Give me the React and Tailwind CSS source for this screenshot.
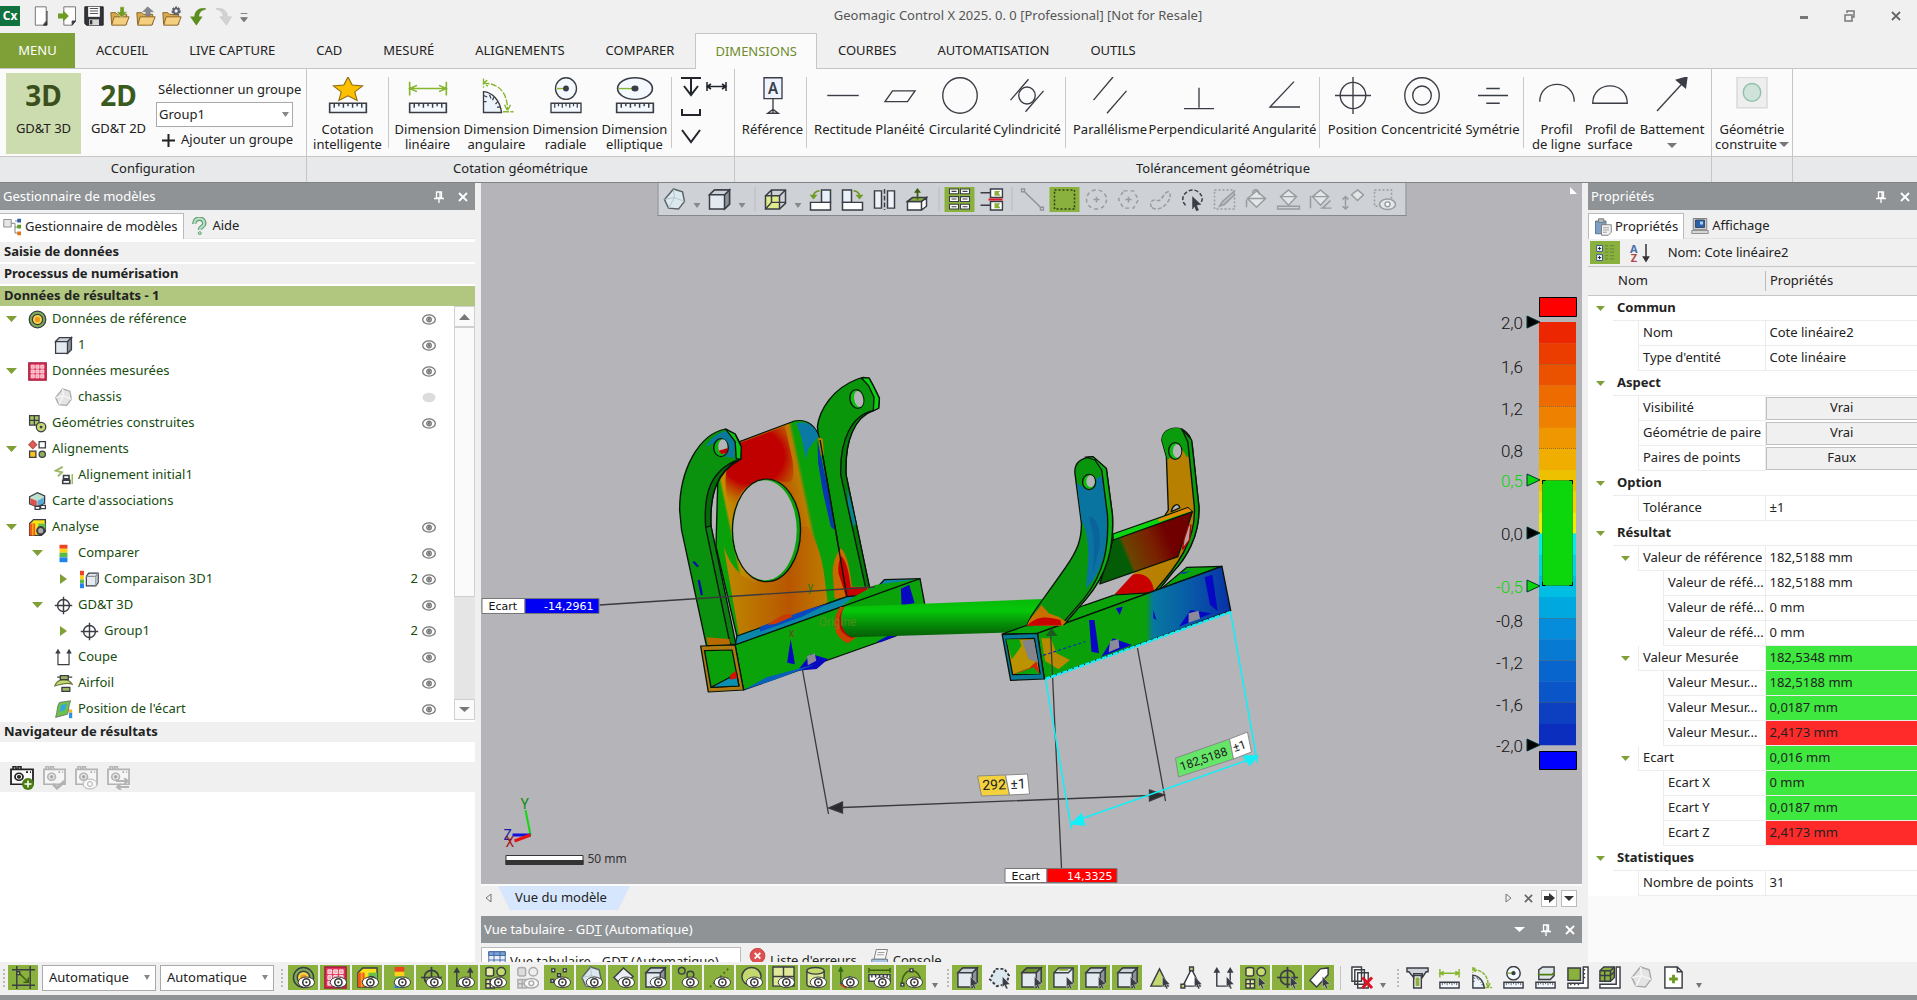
import React, { useState } from "react";

const INK = "#3a3d45";
const GREEN = "#8ab13d";
const LIME = "#c3d96f";

/* ---------- icon drawings, all on a 24 x 24 grid ---------- */

const GLYPHS = {
  newFile: (
    <>
      <path d="M18 6v17h-5z" fill="#333" stroke="#333" />
      <path d="M4 1h13v17l-4 5H4z" fill="#fff" stroke="#777" />
    </>
  ),
  importFile: (
    <>
      <path d="M7 1h14v17l-4 5H7z" fill="#fdfdfd" stroke="#777" />
      <path d="M17 23v-5h4z" fill="#333" />
      <path d="M0 9h6V5l7 7-7 7v-4H0z" fill="#6f9a24" stroke="none" />
    </>
  ),
  save: (
    <>
      <path d="M1 1h22v22H3l-2-2z" fill="#32343a" stroke="#222" />
      <path d="M5 1h14v12H5z" fill="#fff" stroke="none" />
      <path d="M7 3h10M7 6h10M7 9h10" stroke="#555" />
      <path d="M6 16h12v7H6z" fill="#d5d5d5" stroke="none" />
      <path d="M7 17h3v5H7z" fill="#32343a" stroke="none" />
    </>
  ),
  folderIn: (
    <>
      <path d="M1 8h6l2 2h11v12H2z" fill="#d9a94f" stroke="#8d682a" />
      <path d="M5 13h18l-4 10H2z" fill="#f4cf80" stroke="#8d682a" />
      <path d="M12 1h5v6h4l-7 7-6-7h4z" fill="#6f9a24" stroke="#fff" strokeWidth=".5" />
    </>
  ),
  folderOut: (
    <>
      <path d="M1 8h6l2 2h11v12H2z" fill="#d9a94f" stroke="#8d682a" />
      <path d="M5 13h18l-4 10H2z" fill="#f4cf80" stroke="#8d682a" />
      <path d="M12 12h5V7h4l-7-6-6 6h4z" fill="#84888d" stroke="#666" strokeWidth=".5" />
    </>
  ),
  folderGear: (
    <>
      <path d="M1 8h6l2 2h11v12H2z" fill="#d9a94f" stroke="#8d682a" />
      <path d="M5 13h18l-4 10H2z" fill="#f4cf80" stroke="#8d682a" />
      <circle cx="17" cy="6" r="4" stroke="#5c6068" strokeWidth="3" strokeDasharray="2.4 1" />
      <circle cx="17" cy="6" r="3" stroke="#5c6068" strokeWidth="2" />
    </>
  ),
  undo: <path d="M21 3C13 2 8 6 8 13H3l7 10 7-10h-4c0-5 3-8 8-9z" fill="#5d8f1c" stroke="#48750f" strokeWidth=".5" />,
  redo: <path d="M3 3c8-1 13 3 13 10h5l-6 10-8-10h4c0-5-3-8-8-9z" fill="#d2d2d2" stroke="#bbb" strokeWidth=".5" />,
  more: <path d="M7 9h10M7 14h10l-5 5z" fill="#777" stroke="#777" />,

  star: (
    <>
      <path d="M12 0l2.300 5.200 5.700.6-4.300 3.800 1.300 5.600-5-3-5 3 1.300-5.600L4 5.800l5.700-.6z" fill="#fcc000" stroke="#8c6a10" strokeWidth=".6" />
      <path d="M2 17h20v6H2z" fill="#f4f9ff" />
      <path d="M4.500 17v3M7 17v2M9.500 17v3M12 17v2M14.500 17v3M17 17v2M19.500 17v3" strokeWidth=".8" />
    </>
  ),
  dimLinear: (
    <>
      <path d="M2 3v9M22 3v9M2 7.500h20M6 5.500l-4 2 4 2M18 5.500l4 2-4 2" stroke="#86b52e" />
      <path d="M2 17h20v6H2z" fill="#f4f9ff" />
      <path d="M4.500 17v3M7 17v2M9.500 17v3M12 17v2M14.500 17v3M17 17v2M19.500 17v3" strokeWidth=".8" />
    </>
  ),
  dimAngular: (
    <>
      <path d="M3 23V9.500C9 10 14 15 15 23z" fill="#eef4fb" />
      <path d="M3 12l2.500 1M7 11.500L8 14M10 13l-1 2M12.500 16L11 17.500M14 19.500h-2M3 16h2" strokeWidth=".8" />
      <path d="M3 1v6M5.500 2L3 4l3 2M3 4c11 0 16 7 16 17M17 18l2 4 2-4M16 22.500h7" stroke="#86b52e" strokeDasharray="4 1" />
    </>
  ),
  dimRadial: (
    <>
      <circle cx="12" cy="7.500" r="7" fill="#f4f9ff" />
      <path d="M6 7.500h6" stroke="#86b52e" />
      <circle cx="12" cy="7.500" r="1.500" fill={INK} />
      <path d="M2 17h20v6H2z" fill="#f4f9ff" />
      <path d="M4.500 17v3M7 17v2M9.500 17v3M12 17v2M14.500 17v3M17 17v2M19.500 17v3" strokeWidth=".8" />
    </>
  ),
  dimEllipse: (
    <>
      <ellipse cx="12" cy="7.500" rx="9.500" ry="7" fill="#f4f9ff" />
      <path d="M3 7.500h9" stroke="#86b52e" />
      <circle cx="12" cy="7.500" r="1.500" fill={INK} />
      <path d="M2 17h20v6H2z" fill="#f4f9ff" />
      <path d="M4.500 17v3M7 17v2M9.500 17v3M12 17v2M14.500 17v3M17 17v2M19.500 17v3" strokeWidth=".8" />
    </>
  ),
  datum: (
    <>
      <path d="M6 .5h12v13.500H6z" fill="#eef4ff" />
      <text x="12" y="11" textAnchor="middle" fontSize="10" fontWeight="600" fill={INK} stroke="none">A</text>
      <path d="M12 14v9M8.500 23.500L12 21l3.500 2.500z" />
    </>
  ),
  straight: <path d="M3 12h18" />,
  flat: <path d="M7 9h15l-5 7H2z" />,
  circle: <circle cx="12" cy="12" r="11.500" />,
  cylinder: (
    <>
      <circle cx="12" cy="12" r="5.500" />
      <path d="M1 15L13 1.500M11 22.500L23 9" />
    </>
  ),
  parallel: <path d="M1 15L14 0M10 23.500L23 9" />,
  perpend: <path d="M12 7v13M2 20.500h20" />,
  angular: <path d="M22 19.500H2L18 3" />,
  position: (
    <>
      <circle cx="12" cy="12" r="8.500" />
      <path d="M12 0v24M0 12h24" />
    </>
  ),
  concentric: (
    <>
      <circle cx="12" cy="12" r="11.500" />
      <circle cx="12" cy="12" r="6.200" />
    </>
  ),
  symmetry: <path d="M2 12h20M7.500 7.500h9M7.500 17h9" />,
  lineProfile: <path d="M.5 16C.5 1 23.500 1 23.500 16" />,
  surfProfile: <path d="M.5 17C.5 2 23.500 2 23.500 17z" />,
  runout: (
    <>
      <path d="M2 22L19 4" />
      <path d="M22 0l-1 7-6-5z" fill={INK} />
    </>
  ),
  constructed: (
    <>
      <path d="M2 0h20v20H2z" fill="#eee" stroke="#d6d6d6" />
      <circle cx="12" cy="10" r="5.800" fill="#cfe3da" stroke="#8fbfa9" />
    </>
  ),

  donut: (
    <>
      <circle cx="12" cy="12" r="10.500" fill="#7fae57" />
      <circle cx="12" cy="12" r="6.500" fill="#f6d24a" />
      <circle cx="12" cy="12" r="2.500" fill="#e89a1c" stroke="#e89a1c" />
    </>
  ),
  redGrid: (
    <>
      <path d="M1 1h22v22H1z" fill="#e0345a" stroke="#a01c3c" />
      <path d="M4 4h4v4H4zM10 4h4v4h-4zM16 4h4v4h-4zM4 10h4v4H4zM10 10h4v4h-4zM16 10h4v4h-4zM4 16h4v4H4zM10 16h4v4h-4zM16 16h4v4h-4z" fill="#f5a9b6" stroke="#fff" strokeWidth=".8" />
    </>
  ),
  cube: (
    <>
      <path d="M2 7l5-5h15v15l-5 5H2z" fill="#e3eaf0" />
      <path d="M17 22l5-5V2l-5 5z" fill="#8b929a" />
      <path d="M2 7h15l5-5H7z" fill="#cbd3da" />
    </>
  ),
  cubeTop: (
    <>
      <path d="M2 7l5-5h15v15l-5 5H2z" fill="#e3eaf0" />
      <path d="M2 7h15l5-5H7z" fill="#6f9430" />
      <path d="M17 22l5-5V2l-5 5z" fill="#aab1b8" />
    </>
  ),
  cubeEdge: (
    <>
      <path d="M2 7l5-5h15v15l-5 5H2z" fill="#e3eaf0" />
      <path d="M2 7h15l5-5" />
      <path d="M7 4h10" stroke={GREEN} strokeWidth="2" />
    </>
  ),
  wireCube: (
    <>
      <path d="M2 8h14v14H2z" fill="#dfeb8a" />
      <path d="M2 8l6-6h14v14l-6 6M16 8l6-6M8 2v13h14M8 15l-6 7" />
    </>
  ),
  heatCube: (
    <>
      <path d="M2 7l5-5h15v15l-5 5H2z" fill="#f7e11b" />
      <path d="M2 7h7v15H2z" fill="#ef5a1a" stroke="none" />
      <path d="M5 7h2v15H5z" fill="#fba21a" stroke="none" />
      <path d="M13 7h9v8H13z" fill="#68c14a" stroke="none" />
      <circle cx="16" cy="16" r="4.500" fill="#aaa" strokeWidth="2.500" />
    </>
  ),
  poly: (
    <>
      <path d="M11 1l9 3 2 10-6 8-10-1-4-9z" fill="#dbe8ee" stroke="#5c646a" />
      <path d="M11 1l1 9 10 4M12 10L2 12M12 10l-6 11" stroke="#aebbc3" strokeWidth=".8" />
    </>
  ),
  polyGray: (
    <>
      <path d="M11 1l9 3 2 10-6 8-10-1-4-9z" fill="#e4e4e4" stroke="#aaa" />
      <path d="M11 1l1 9 10 4M12 10L2 12M12 10l-6 11" stroke="#f6f6f6" />
    </>
  ),
  shapes: (
    <>
      <path d="M2 2h12v12H2zM2 8h12M8 2v12" fill="#a8c463" />
      <circle cx="16.500" cy="16.500" r="6" fill={LIME} />
      <circle cx="16.500" cy="16.500" r="1" fill={INK} />
    </>
  ),
  shapeGrid: (
    <>
      <path d="M2 3c0-2 8-2 8 0v6c0 2-8 2-8 0z" fill="#e6eda6" />
      <circle cx="18" cy="6" r="4.500" fill={LIME} />
      <path d="M2 14h9v9H2zM2 18.500h9M6.500 14v9" fill="#e6eda6" />
    </>
  ),
  shapeGridGray: (
    <g stroke="#aaa">
      <path d="M2 3c0-2 8-2 8 0v6c0 2-8 2-8 0z" fill="#ddd" />
      <circle cx="18" cy="6" r="4.500" fill="#eee" />
      <path d="M2 14h9v9H2zM2 18.500h9M6.500 14v9" fill="#ddd" />
      <ellipse cx="16" cy="18" rx="7.500" ry="5" fill="#fafafa" />
      <circle cx="16" cy="18" r="2.500" />
    </g>
  ),
  alignments: (
    <>
      <path d="M6 1l5 5-5 5-5-5z" fill="#e25b63" stroke="#b54" />
      <path d="M14 2h8v8h-8z" fill="#fff" />
      <path d="M2 14h8v8H2z" fill="#fbc11c" />
      <circle cx="18" cy="18" r="4" fill="#8fae5a" />
    </>
  ),
  initAlign: (
    <>
      <path d="M11 1L2 6l8 2-5 5" stroke="#9fb86a" strokeWidth="2.500" />
      <path d="M12 12h7v4h-7zM11 18h9v4h-9z" fill="#fff" strokeWidth="2" />
      <path d="M23 10v13" stroke={GREEN} />
    </>
  ),
  mapCard: (
    <>
      <path d="M2 6l10-5 9 4v9l-9 5-10-4z" fill="#bfe1d0" />
      <path d="M3 8l8 3v8l-8-4z" fill="#e0504a" stroke="none" />
      <path d="M12 11l8-4v7l-8 4z" fill="#58a9d8" stroke="none" />
      <path d="M9 18h6v4H9zM16 17h6v4h-6z" fill="#fff" />
    </>
  ),
  heatBar: (
    <>
      <path d="M7 1h10v5H7z" fill="#ee4320" stroke="none" />
      <path d="M7 6h10v5H7z" fill="#fbd21a" stroke="none" />
      <path d="M7 11h10v6H7z" fill="#58b947" stroke="none" />
      <path d="M7 17h10v6H7z" fill="#1f83ee" stroke="none" />
    </>
  ),
  compare3d: (
    <>
      <path d="M0 1h5v6H0z" fill="#ee4320" stroke="none" />
      <path d="M0 7h5v5H0z" fill="#fbd21a" stroke="none" />
      <path d="M0 12h5v5H0z" fill="#58b947" stroke="none" />
      <path d="M0 17h5v6H0z" fill="#1f83ee" stroke="none" />
      <path d="M8 8l3-4h12v12l-3 4H8z" fill="#e3eaf0" strokeWidth="1.500" />
      <path d="M20 20V8l3-4M20 8H8" stroke="#8b929a" />
    </>
  ),
  target: (
    <>
      <circle cx="12" cy="12" r="7.500" strokeWidth="1.800" />
      <path d="M12 1v22M1 12h22" strokeWidth="1.800" />
    </>
  ),
  section: (
    <>
      <path d="M5 4v17h14V4" strokeWidth="1.500" />
      <path d="M5 1L1.500 7h7zM19 1l-3.500 6h7z" fill={INK} stroke="none" />
    </>
  ),
  airfoil: (
    <>
      <path d="M1 15C5 5 18 5 23 13c-7-3-14 0-22 2z" fill={LIME} stroke="#6b7a3a" />
      <path d="M8 2h10v5H8zM10 17h10v5H10z" fill="#9db35c" />
      <path d="M4 4h4M18 4h5" />
    </>
  ),
  deviation: (
    <>
      <path d="M7 3l14-2c-3 7-2 12-4 17L2 22C5 14 3 8 7 3z" fill="#6cc24a" stroke="#666" strokeWidth="1" />
      <path d="M9 6l7-1c-1 3-1 6-3 8l-6 2c2-4 1-6 2-9z" fill="#35a5e0" stroke="none" />
      <path d="M19 12h4v4h-4z" fill="#f6b51a" stroke="none" />
      <path d="M19 16h4v7h-4z" fill="#2f8fe6" stroke="none" />
    </>
  ),
  points: (
    <>
      <path d="M4 3h3v3H4zM16 3h3v3h-3zM10 8h3v3h-3zM3 14h3v3H3z" fill="#fff" />
      <path d="M8 15h3v3H8z" fill={LIME} />
    </>
  ),
  plane: <path d="M12 2l10 9-11 10-9-9z" fill="#e8eef2" />,
  rings: (
    <>
      <circle cx="6" cy="5" r="3.500" />
      <circle cx="15" cy="9" r="3.500" />
    </>
  ),
  dotLine: <path d="M2 22L22 2" strokeDasharray="2 3" strokeWidth="2" stroke="#4d6b18" />,
  disc: <ellipse cx="12" cy="11" rx="10" ry="9.500" fill={LIME} />,
  quad: <path d="M1 1h22v20H1zM1 11h22M12 1v20" fill="#dfe997" />,
  tin: (
    <>
      <path d="M3 5v14c0 4 18 4 18 0V5" fill="#dfe997" />
      <ellipse cx="12" cy="5" rx="9" ry="3.500" fill={LIME} />
    </>
  ),
  axes: (
    <>
      <path d="M5 4v15" stroke="#2c6b16" strokeWidth="1.500" />
      <path d="M5 0L2 6h6z" fill="#2c6b16" stroke="none" />
      <path d="M5 19l10-8" stroke="#1d49b8" strokeWidth="2" />
      <path d="M5 19l6 4" stroke="#d82a1d" strokeWidth="2" />
    </>
  ),
  ruler: (
    <>
      <path d="M1 2v5M23 2v5M1 4.500h22" stroke="#3c6010" />
      <path d="M1 9h22v7H1z" fill="#fff" />
      <path d="M4 9v3M8 9v3M12 9v3M16 9v3M20 9v3" />
    </>
  ),
  arc: (
    <>
      <path d="M2 19C2 0 22 0 22 19" stroke="#3c6010" />
      <path d="M1 18h3v3H1zM10.500 3h3v3h-3z" fill="#fff" />
    </>
  ),
  meshSel: <path d="M8 3h9l5 7-3 9-10 2-7-7z" fill="#dbe8ee" strokeDasharray="3 2" strokeWidth="2" />,
  tri: <path d="M12 3l9 18H3z" fill={LIME} />,
  triPts: (
    <>
      <path d="M12 3l9 18H3z" fill="#fff" />
      <path d="M10 1h4v4h-4zM1 19h4v4H1z" fill={LIME} />
    </>
  ),
  tag: <path d="M13 3l8-1v7L9 22l-7-7z" fill="#fff" />,
  fit: (
    <>
      <path d="M5 0v24M0 4h24M19 0v24M0 20h24" />
      <path d="M7 7l9 9M17 12v5h-5" stroke="#3c6010" />
      <path d="M5 6h3v3H5z" fill={LIME} />
    </>
  ),
  removeDoc: (
    <>
      <path d="M2 1h10v15H2zM5 4h10v15H5zM8 7h11v16H8z" fill="#fff" />
      <path d="M13 12l10 11M23 12L13 23" stroke="#dd1122" strokeWidth="3" />
    </>
  ),
  caliper: (
    <>
      <path d="M1 2h22v4h-2l-4 6V8H8v4L3 6H1z" fill="#cfd3d8" />
      <path d="M8 10h8v13H8z" />
      <path d="M10 12h4v9h-4z" fill={GREEN} stroke="none" />
    </>
  ),
  slab: (
    <>
      <path d="M5 4l4-3h12v9l-4 4H5z" fill="#dfe4e8" />
      <path d="M4 9h15l2-2" stroke="#4f7d14" strokeWidth="2" />
      <path d="M2 17h20v6H2z" fill="#f4f9ff" />
      <path d="M4.500 17v3M7 17v2M9.500 17v3M12 17v2M14.500 17v3M17 17v2M19.500 17v3" strokeWidth=".8" />
    </>
  ),
  squareRule: (
    <>
      <path d="M2 2h13v13H2z" fill={GREEN} />
      <path d="M18 1h5v22H2v-5h16z" fill="#fff" />
      <path d="M18 4h2M18 8h2M18 12h2M5 18v2M9 18v2M13 18v2" />
    </>
  ),
  cubeRule: (
    <>
      <path d="M2 5l4-4h11v11l-4 4H2z" fill={GREEN} />
      <path d="M2 5h11l4-4M13 5v11M7 5v11M2 10h11l4-4" />
      <path d="M19 1h4v22H2v-4h17z" fill="#fff" />
    </>
  ),
  addDoc: (
    <>
      <path d="M3 1h13l5 5v17H3z" fill="#fff" />
      <path d="M16 1v5h5" />
      <path d="M12 9v9M7.500 13.500h9" stroke="#6f9a24" strokeWidth="3" />
    </>
  ),
  tiltLeft: (
    <>
      <path d="M13 2h9v13h-9z" fill="#e8f0f8" />
      <path d="M2 15h20v8H2z" fill="#fff" />
      <path d="M11 3C7 3 5 6 5 8" stroke="#6f9a24" strokeWidth="1.800" />
      <path d="M1 7h8l-4 5z" fill="#6f9a24" stroke="none" />
    </>
  ),
  tiltRight: (
    <>
      <path d="M2 2h9v13H2z" fill="#e8f0f8" />
      <path d="M2 15h20v8H2z" fill="#fff" />
      <path d="M13 3c4 0 6 3 6 5" stroke="#6f9a24" strokeWidth="1.800" />
      <path d="M15 7h8l-4 5z" fill="#6f9a24" stroke="none" />
    </>
  ),
  mirror: (
    <>
      <path d="M2 3h7v18H2zM15 3h7v18h-7z" fill="#eef3f8" />
      <path d="M12 1v22" strokeDasharray="5 2" />
    </>
  ),
  normalTo: (
    <>
      <path d="M3 14h14v9H3zM17 14l5-4v9l-5 4z" fill="#fff" />
      <path d="M3 14l5-4h14l-5 4z" fill={GREEN} />
      <path d="M13 12V3" stroke="#3c6010" strokeWidth="1.800" />
      <path d="M13 0L9.500 5h7z" fill="#3c6010" stroke="none" />
    </>
  ),
  labelsOn: (
    <path d="M2 1h9v5H2zM13 1h9v5h-9zM2 9h9v5H2zM13 9h9v5h-9zM2 17h9v5H2zM13 17h9v5h-9zM4 3.500h5M15 3.500h5M4 11.500h5M15 11.500h5M4 19.500h5M15 19.500h5" fill="#fff" strokeWidth="1.100" />
  ),
  labelsSplit: (
    <>
      <path d="M11 1h12v9H11zM11 14h12v9H11z" fill="#fff" />
      <path d="M15 3h6l-2 2 2 3h-6zM15 16h6l-2 2 2 3h-6z" fill={GREEN} stroke="none" />
      <path d="M1 5h10M1 18h10" />
      <path d="M9 12h14" stroke="#e0182a" strokeWidth="2" />
    </>
  ),
  pickLine: (
    <g stroke="#8f9498">
      <path d="M4 4l16 16M1 1h3v3H1zM20 20h3v3h-3z" fill="#ddd" />
    </g>
  ),
  pickRect: (
    <path d="M2 2h20v20H2z" strokeDasharray="2 2" stroke="#2f3d12" strokeWidth="1.500" />
  ),
  pickCircle: (
    <g stroke="#979ca0">
      <circle cx="12" cy="12" r="10" strokeDasharray="4 3" strokeWidth="1.500" />
      <path d="M12 9v6M9 12h6" strokeWidth="1.500" />
    </g>
  ),
  pickHex: (
    <g stroke="#979ca0">
      <path d="M7 3h10l5 9-5 9H7l-5-9z" strokeDasharray="4 3" strokeWidth="1.500" />
      <path d="M12 9v6M9 12h6" strokeWidth="1.500" />
    </g>
  ),
  pickFree: <path d="M3 20c-3-6 2-9 6-7s6-9 11-9c5 5-2 13-6 16s-9 2-11 0z" stroke="#979ca0" strokeWidth="1.500" strokeDasharray="4 2" />,
  pickLasso: (
    <>
      <path d="M5 18C-2 10 6 2 12 2s14 8 7 15" strokeDasharray="4 2" strokeWidth="1.500" />
      <path d="M12 9l8 8-4 1 2 5-2 1-2-5-2 3z" fill={INK} strokeWidth=".5" />
    </>
  ),
  pickBrush: (
    <g stroke="#979ca0">
      <path d="M2 2h20v20H2z" strokeDasharray="2 2" />
      <path d="M21 4L10 14l-3 5 5-2L22 7z" fill="#bcc0c3" />
    </g>
  ),
  pickFill: (
    <g stroke="#979ca0">
      <path d="M12 3l9 8-9 9-9-9z" fill="#e3e5e7" />
      <path d="M3 11h18M8 7c0-7 6-7 7 0M2 12v8" />
    </g>
  ),
  pickDrop: (
    <g stroke="#979ca0">
      <path d="M12 2l8 7-8 9-8-9z" fill="#e3e5e7" />
      <path d="M4 9h16M1 19h22v3H1z" />
    </g>
  ),
  pickSlope: (
    <g stroke="#979ca0">
      <path d="M12 2l8 7-8 9-8-9z" fill="#e3e5e7" />
      <path d="M4 9h16M2 8v13M14 21l8-8M12 21h11" />
    </g>
  ),
  pickMove: (
    <g stroke="#979ca0">
      <path d="M17 2l6 5-6 6-6-6z" fill="#e3e5e7" />
      <path d="M5 9v13M2 12l3-3 3 3M2 19l3 3 3-3" strokeWidth="1.500" />
    </g>
  ),
  pickEye: (
    <g stroke="#979ca0">
      <path d="M2 2h17v17H2z" strokeDasharray="2 2" strokeWidth="1.500" />
      <ellipse cx="15" cy="17" rx="8" ry="5.500" fill="#e3e5e7" />
      <circle cx="15" cy="17" r="2.500" fill="#fff" strokeWidth="1.500" />
    </g>
  ),
  treeTab: (
    <>
      <path d="M1 2h10v10H1z" fill="#e6e6e6" stroke="#888" />
      <path d="M11 7h5v13h4M16 4h4M16 12h4" stroke="#777" />
      <path d="M19 1h5v5h-5z" fill="#2d5ea8" stroke="none" />
      <path d="M19 9h5v5h-5z" fill="#5c9c1e" stroke="none" />
      <path d="M19 18h5v5h-5z" fill="#e07418" stroke="none" />
    </>
  ),
  help: (
    <>
      <path d="M6 9c-1-9 14-9 13 0 0 4-6 4-6 8" stroke="#5d9c74" strokeWidth="6" />
      <path d="M6 9c-1-9 14-9 13 0 0 4-6 4-6 8" stroke="#b9dec4" strokeWidth="3" />
      <circle cx="13" cy="21.500" r="2" fill="#b9dec4" stroke="#5d9c74" />
    </>
  ),
  clipboard: (
    <>
      <path d="M2 4h14v17H2z" fill="#7f9fc4" stroke="#55718f" />
      <path d="M6 1h7v5H6z" fill="#b8b8b8" stroke="#777" />
      <path d="M10 9h13v10l-4 4h-9z" fill="#f2f2f2" stroke="#777" />
      <path d="M12 13h8M12 16h8M12 19h5" stroke="#999" />
    </>
  ),
  monitor: (
    <>
      <path d="M3 2h18v15H3z" fill="#c9ced4" stroke="#777" />
      <path d="M6 4h12v10H6z" fill="#2d5fa8" stroke="#345" />
      <path d="M12 6h4v4h-4z" fill="#a8d0f0" stroke="none" />
      <path d="M1 18h22v4H1z" fill="#d6d6d6" stroke="#888" />
    </>
  ),
  sortCat: (
    <>
      <path d="M2 3h7v7H2zM2 14h7v7H2z" fill="#fff" stroke="#3a5a9a" />
      <path d="M5.500 4.500v4M3.500 6.500h4M5.500 15.500v4M3.500 17.500h4" stroke="#222" />
      <path d="M12 3h4M12 7h4M12 11h4M12 15h4M12 19h4M18 3h5M18 7h5M18 11h5M18 15h5M18 19h5" stroke="#6d8f38" strokeWidth="1.500" />
    </>
  ),
  tableTab: (
    <>
      <path d="M1 1h22v22H1z" fill="#eaf1fb" stroke="#3d639c" />
      <path d="M1 1h22v5H1z" fill="#7ea3d6" stroke="#3d639c" />
      <path d="M1 12h22M1 18h22M8 1v22M16 1v22" stroke="#3d639c" />
    </>
  ),
  errorTab: (
    <>
      <circle cx="12" cy="11" r="10.500" fill="#e05050" stroke="#c23a3a" />
      <path d="M8 7l8 8M16 7l-8 8" stroke="#fff" strokeWidth="2.500" />
    </>
  ),
  consoleTab: (
    <>
      <path d="M7 2h15l-3 13H4z" fill="#f6f6f6" stroke="#777" />
      <path d="M9 6h9M8 9h9" stroke="#999" />
      <path d="M1 15h21v7H1z" fill="#a9c4e4" stroke="#678" />
    </>
  ),
  camera: (
    <>
      <path d="M1 5h22v17H1z" fill="#fafafa" strokeWidth="1.800" />
      <path d="M3 5V2h3v3M8 5V2h3v3" strokeWidth="1.500" />
      <circle cx="9" cy="13.500" r="4" strokeWidth="1.800" />
      <circle cx="9" cy="13.500" r="1.500" fill={INK} />
      <path d="M16 8h2M20 8h1" strokeWidth="2" />
    </>
  ),
};

function Glyph({ name, w = 24, h = 24, color = INK, sw = 1.2, eye, cursor }) {
  return (
    <svg
      width={w}
      height={h}
      viewBox="0 0 24 24"
      preserveAspectRatio="none"
      fill="none"
      stroke={color}
      strokeWidth={sw}
      className="shrink-0"
      aria-hidden
    >
      {GLYPHS[name]}
      {eye && (
        <>
          <ellipse cx="15" cy="17" rx="8.500" ry="5.500" fill="#fff" stroke="#333" strokeWidth="1" />
          <circle cx="15" cy="17" r="3.800" fill="#fff" stroke="#333" strokeWidth="1.600" />
          <circle cx="15" cy="17" r="1.200" fill="#333" stroke="none" />
        </>
      )}
      {cursor && <path d="M15 11l8 8-4 .5 2 4-2 .5-2-4-2 2.500z" fill={INK} stroke="#fff" strokeWidth=".4" />}
    </svg>
  );
}

function Down({ className = "text-[#777]", w = 8 }) {
  return (
    <svg width={w} height="5" viewBox="0 0 8 5" preserveAspectRatio="none" className={`shrink-0 ${className}`} aria-hidden>
      <path d="M0 0h8L4 5z" fill="currentColor" />
    </svg>
  );
}

function Pin() {
  return (
    <svg width="10" height="12" viewBox="0 0 10 12" fill="none" stroke="#fff" aria-hidden>
      <path d="M2.500 1h5v6h-5zM6 1v6M0 7.500h10M5 8v4" strokeWidth="1.300" />
    </svg>
  );
}

function Cross({ color = "#fff", size = 10 }) {
  return (
    <svg width={size} height={size} viewBox="0 0 10 10" fill="none" stroke={color} strokeWidth="1.800" aria-hidden>
      <path d="M1 1l8 8M9 1L1 9" />
    </svg>
  );
}

/* ---------- title bar and ribbon ---------- */

const QUICK = ["newFile", "importFile", "save", "folderIn", "folderOut", "folderGear", "undo", "redo"];
const TABS = ["ACCUEIL", "LIVE CAPTURE", "CAD", "MESURÉ", "ALIGNEMENTS", "COMPARER", "DIMENSIONS", "COURBES", "AUTOMATISATION", "OUTILS"];

function TitleBar() {
  return (
    <header className="relative flex h-[33px] shrink-0 items-center justify-between bg-[#f0f0f0] pb-0.5">
      <div className="flex items-center">
        <span className="mr-3 flex size-5 items-center justify-center bg-[#10733f] text-xs font-bold text-white">Cx</span>
        {QUICK.map((n) => (
          <button key={n} aria-label={n} className="flex w-[26px] justify-start">
            <Glyph name={n} w={20} h={20} />
          </button>
        ))}
        <button aria-label="more" className="-ml-1">
          <Glyph name="more" w={16} h={20} />
        </button>
      </div>
      <h1 className="pointer-events-none absolute inset-x-0 ml-[119px] text-center text-[13px] text-[#555]">
        Geomagic Control X 2025. 0. 0 [Professional] [Not for Resale]
      </h1>
      <div className="flex items-center gap-9 pr-4">
        <button aria-label="Réduire" className="mt-1 h-[3px] w-2 bg-[#777]" />
        <button aria-label="Restaurer">
          <svg width="11" height="12" viewBox="0 0 11 12" fill="none" stroke="#777" strokeWidth="1.500">
            <path d="M3 3V1h7v6H8M1 5h7v6H1z" />
          </svg>
        </button>
        <button aria-label="Fermer">
          <Cross color="#666" />
        </button>
      </div>
    </header>
  );
}

function TabBar() {
  const [active, setActive] = useState("DIMENSIONS");
  return (
    <nav className="flex h-9 shrink-0 items-stretch gap-px border-b border-[#c6c6c6] bg-[#f0f0f0] text-[13px]">
      <button className="w-[75px] bg-[#7fa036] text-white">MENU</button>
      {TABS.map((t) => (
        <button
          key={t}
          onClick={() => setActive(t)}
          className={
            t === active
              ? "-mb-px border border-b-0 border-[#c6c6c6] bg-[#fbfbfb] px-[19px] text-[#6e8c2c]"
              : "px-5 text-[#222]"
          }
        >
          {t}
        </button>
      ))}
    </nav>
  );
}

function Tool({ icon, w, children, iw = 36, ih = 37 }) {
  return (
    <button className={`flex shrink-0 flex-col items-center pt-2 ${w}`}>
      <Glyph name={icon} w={iw} h={ih} sw={0.9} />
      <span className="mt-2 text-[13px] leading-[15px] whitespace-nowrap">{children}</span>
    </button>
  );
}

function Rule() {
  return <span className="my-2 w-px shrink-0 bg-[#c9c9c9]" />;
}

function Group({ label, className, children }) {
  return (
    <section className={`flex shrink-0 flex-col border-r border-[#c6c6c6] ${className}`}>
      <div className="flex h-[88px] items-stretch border-b border-[#c6c6c6] bg-[#fbfbfb]">{children}</div>
      <h2 className="flex h-6 items-center justify-center bg-[#e7e9eb] text-[13px]">{label}</h2>
    </section>
  );
}

function Ribbon() {
  return (
    <div className="flex h-[114px] shrink-0 overflow-hidden border-b border-[#7f8487] bg-[#e7e9eb]">
      <Group label="Configuration" className="w-[307px]">
        <button className="mt-1 mb-0.5 ml-1.5 flex w-[75px] flex-col items-center bg-[#cddcae] pt-1">
          <span className="text-[28px] leading-9 font-bold text-[#3b4f1d]">3D</span>
          <span className="mt-1.5 text-[13px]">GD&amp;T 3D</span>
        </button>
        <button className="mt-1 flex w-[75px] flex-col items-center pt-1">
          <span className="text-[28px] leading-9 font-bold text-[#3b5a1d]">2D</span>
          <span className="mt-1.5 text-[13px]">GD&amp;T 2D</span>
        </button>
        <div className="flex flex-col pt-2.5 text-[13px]">
          <label htmlFor="group" className="pl-0.5 leading-5 whitespace-nowrap">Sélectionner un groupe</label>
          <div className="relative mt-[3px] w-[137px]">
            <select id="group" className="h-[25px] w-full appearance-none border border-[#aaa] bg-white pl-0.5">
              <option>Group1</option>
            </select>
            <Down className="absolute top-2.5 right-1 text-[#888]" w={7} />
          </div>
          <button className="flex h-[26px] items-center gap-1.5 pl-1.5 whitespace-nowrap">
            <svg width="13" height="13" stroke="#222" strokeWidth="2" aria-hidden>
              <path d="M6.500 0v13M0 6.500h13" />
            </svg>
            Ajouter un groupe
          </button>
        </div>
      </Group>
      <Group label="Cotation géométrique" className="w-[428px]">
        <Tool icon="star" w="w-[81px]" iw={44}>Cotation<br />intelligente</Tool>
        <Rule />
        <span className="w-1" />
        <Tool icon="dimLinear" w="w-[69px]" iw={44}>Dimension<br />linéaire</Tool>
        <Tool icon="dimAngular" w="w-[69px]">Dimension<br />angulaire</Tool>
        <Tool icon="dimRadial" w="w-[69px]">Dimension<br />radiale</Tool>
        <Tool icon="dimEllipse" w="w-[69px]" iw={44}>Dimension<br />elliptique</Tool>
        <span className="w-0.5" />
        <Rule />
        <div className="grid grid-cols-2 content-start gap-x-1 pt-2 pl-2">
          <button aria-label="Profondeur">
            <svg width="22" height="20" fill="none" stroke="#22252b" strokeWidth="2">
              <path d="M1 1h20M11 1v16M4 9l7 9 7-9" />
            </svg>
          </button>
          <button aria-label="Distance">
            <svg width="22" height="20" fill="none" stroke="#22252b" strokeWidth="1.500">
              <path d="M1 5v9M20 5v9M1 9.500h19M5 7l-4 2.500L5 12M16 7l4 2.500-4 2.500" />
            </svg>
          </button>
          <button aria-label="Lamage" className="col-span-2 w-[22px] pt-2">
            <svg width="22" height="18" fill="none" stroke="#22252b" strokeWidth="2">
              <path d="M2 4v6h18V4" />
            </svg>
          </button>
          <button aria-label="Fraisage" className="col-span-2 w-[22px] pt-1">
            <svg width="22" height="18" fill="none" stroke="#22252b" strokeWidth="2">
              <path d="M2 3l9 12 9-12" />
            </svg>
          </button>
        </div>
      </Group>
      <Group label="Tolérancement géométrique" className="w-[977px]">
        <span className="w-1" />
        <Tool icon="datum" w="w-[67px]">Référence</Tool>
        <Rule />
        <span className="w-1.5" />
        <Tool icon="straight" w="w-[60px]" iw={42}>Rectitude</Tool>
        <Tool icon="flat" w="w-[54px]">Planéité</Tool>
        <Tool icon="circle" w="w-[66px]">Circularité</Tool>
        <Tool icon="cylinder" w="w-[68px]">Cylindricité</Tool>
        <span className="w-1" />
        <Rule />
        <span className="w-1.5" />
        <Tool icon="parallel" w="w-[76px]">Parallélisme</Tool>
        <Tool icon="perpend" w="w-[102px]">Perpendicularité</Tool>
        <Tool icon="angular" w="w-[69px]">Angularité</Tool>
        <Rule />
        <span className="w-1.5" />
        <Tool icon="position" w="w-[53px]">Position</Tool>
        <Tool icon="concentric" w="w-[85px]">Concentricité</Tool>
        <Tool icon="symmetry" w="w-[57px]">Symétrie</Tool>
        <span className="w-0.5" />
        <Rule />
        <span className="w-1.5" />
        <Tool icon="lineProfile" w="w-[53px]">Profil<br />de ligne</Tool>
        <Tool icon="surfProfile" w="w-[54px]">Profil de<br />surface</Tool>
        <Tool icon="runout" w="w-[70px]">
          Battement
          <Down className="mx-auto mt-1.5 text-[#777]" w={10} />
        </Tool>
      </Group>
      <Group label="" className="w-[81px]">
        <Tool icon="constructed" w="w-[80px]">
          Géométrie
          <span className="flex items-center gap-0.5">construite<Down w={10} /></span>
        </Tool>
      </Group>
      <div className="h-[88px] flex-1 border-b border-[#c6c6c6] bg-[#fbfbfb]" />
    </div>
  );
}

/* ---------- model manager ---------- */

const TREE = [
  { text: "Données de référence", icon: "donut", level: 0, arrow: "open", eye: true },
  { text: "1", icon: "cube", level: 1, eye: true },
  { text: "Données mesurées", icon: "redGrid", level: 0, arrow: "open", eye: true },
  { text: "chassis", icon: "polyGray", level: 1, eye: "off" },
  { text: "Géométries construites", icon: "shapes", level: 0, eye: true },
  { text: "Alignements", icon: "alignments", level: 0, arrow: "open" },
  { text: "Alignement initial1", icon: "initAlign", level: 1 },
  { text: "Carte d'associations", icon: "mapCard", level: 0 },
  { text: "Analyse", icon: "heatCube", level: 0, arrow: "open", eye: true },
  { text: "Comparer", icon: "heatBar", level: 1, arrow: "open", eye: true },
  { text: "Comparaison 3D1", icon: "compare3d", level: 2, arrow: "closed", eye: true, count: 2 },
  { text: "GD&T 3D", icon: "target", level: 1, arrow: "open", eye: true },
  { text: "Group1", icon: "target", level: 2, arrow: "closed", eye: true, count: 2 },
  { text: "Coupe", icon: "section", level: 1, eye: true },
  { text: "Airfoil", icon: "airfoil", level: 1, eye: true },
  { text: "Position de l'écart", icon: "deviation", level: 1, eye: true },
];

const INDENT = ["pl-1.5", "pl-8", "pl-[58px]"];

function TreeArrow({ state }) {
  return (
    <svg width="12" height="12" viewBox="0 0 12 12" className="mr-2.5 shrink-0" fill="#7fa036" aria-hidden>
      {state === "open" && <path d="M0 3h11L5.500 9z" />}
      {state === "closed" && <path d="M2 1l7 5-7 5z" />}
    </svg>
  );
}

function EyeButton({ off }) {
  return (
    <button aria-label="Visibilité" className="ml-1">
      <svg width="14" height="11" viewBox="0 0 14 11" fill="none" stroke="#777" strokeWidth="1.300">
        {off ? (
          <ellipse cx="7" cy="5.500" rx="6.500" ry="4.800" fill="#dcdcdc" stroke="none" />
        ) : (
          <>
            <ellipse cx="7" cy="5.500" rx="6.300" ry="4.600" />
            <circle cx="7" cy="5.500" r="2.300" />
            <circle cx="7" cy="5.500" r=".8" fill="#555" />
          </>
        )}
      </svg>
    </button>
  );
}

function PanelHead({ title, menu }) {
  return (
    <div className="flex h-[27px] shrink-0 items-center bg-[#8f9396] pl-px text-[13px] text-white">
      <h2 className="flex-1 pt-px pl-0.5">{title}</h2>
      {menu && <Down className="mr-4 text-white" w={11} />}
      <button aria-label="Épingler" className="mr-[14px]"><Pin /></button>
      <button aria-label="Fermer" className="mr-[7px]"><Cross /></button>
    </div>
  );
}

function Bar({ children, active }) {
  return (
    <button
      className={`flex h-5 w-full shrink-0 items-center pl-1 text-[13px] font-bold ${active ? "bg-[#b1c77f]" : "mb-0.5 bg-[#f0f0f0]"}`}
    >
      {children}
    </button>
  );
}

function ModelManager() {
  return (
    <aside className="flex w-[475px] shrink-0 flex-col bg-white">
      <PanelHead title="Gestionnaire de modèles" />
      <div className="mb-[3px] flex h-[29px] shrink-0 items-end border-b border-[#e6e6e6] bg-[#f0f0f0] text-[13px]">
        <button className="-mb-px flex h-[26px] items-center gap-1 border-t border-r border-[#bbb] bg-white pr-1.5 pl-[3px]">
          <Glyph name="treeTab" w={18} h={18} />
          Gestionnaire de modèles
        </button>
        <button className="flex h-6 items-center gap-1 pl-1.5">
          <Glyph name="help" w={18} h={18} />
          Aide
        </button>
      </div>
      <Bar>Saisie de données</Bar>
      <Bar>Processus de numérisation</Bar>
      <Bar active>Données de résultats - 1</Bar>
      <div className="flex">
        <ul className="flex-1 text-[13px] text-[#174c10]">
          {TREE.map((n) => (
            <li key={n.text} className={`flex h-[26px] items-center pr-[18px] ${INDENT[n.level]}`}>
              <TreeArrow state={n.arrow} />
              <Glyph name={n.icon} w={19} h={19} sw={1.6} />
              <span className="ml-[5px] flex-1">{n.text}</span>
              {n.count}
              {n.eye && <EyeButton off={n.eye === "off"} />}
            </li>
          ))}
        </ul>
        <div className="mb-0.5 flex w-[21px] flex-col bg-[#e5e5e5]">
          <button aria-label="Monter" className="flex h-[21px] items-center justify-center border border-[#d0d0d0] bg-[#fafafa]">
            <svg width="11" height="6" fill="#777"><path d="M0 6h11L5.500 0z" /></svg>
          </button>
          <div className="h-[270px] border border-[#d0d0d0] bg-[#fafafa]" />
          <span className="flex-1" />
          <button aria-label="Descendre" className="flex h-[21px] items-center justify-center border border-[#d0d0d0] bg-[#fafafa]">
            <Down w={11} />
          </button>
        </div>
      </div>
      <Bar>Navigateur de résultats</Bar>
      <div className="mt-[18px] flex h-[30px] items-start gap-[9px] bg-[#f0f0f0] pt-[3px] pl-2.5">
        <button aria-label="Capturer" className="relative">
          <Glyph name="camera" w={24} h={21} color="#222" />
          <svg width="12" height="12" className="absolute right-0 -bottom-1">
            <circle cx="6" cy="6" r="6" fill="#4c7d12" />
            <path d="M6 2.500v7M2.500 6h7" stroke="#fff" strokeWidth="1.500" />
          </svg>
        </button>
        <button aria-label="Valider" className="relative opacity-50">
          <Glyph name="camera" w={23} h={21} color="#777" />
          <svg width="14" height="11" className="absolute right-0 -bottom-1" fill="none">
            <path d="M1 5l4 4 8-7" stroke="#777" strokeWidth="3" />
          </svg>
        </button>
        <button aria-label="Afficher" className="relative opacity-50">
          <Glyph name="camera" w={23} h={21} color="#777" />
          <svg width="16" height="12" className="absolute right-0 -bottom-1" fill="#fff" stroke="#777">
            <ellipse cx="8" cy="6" rx="7" ry="5" />
            <circle cx="8" cy="6" r="2.500" />
          </svg>
        </button>
        <button aria-label="Échanger" className="relative opacity-50">
          <Glyph name="camera" w={23} h={21} color="#777" />
          <svg width="14" height="12" className="absolute right-0 -bottom-1" fill="none" stroke="#777" strokeWidth="2">
            <path d="M0 3h11M8 0l4 3-4 3M13 9H2M5 6L1 9l4 3" />
          </svg>
        </button>
      </div>
    </aside>
  );
}

/* ---------- 3D view ---------- */

const GRAY_TOOL = ["pickCircle", "pickHex", "pickFree", "pickLasso", "pickBrush", "pickFill", "pickDrop", "pickSlope", "pickMove", "pickEye"];

function ViewTool({ name, on }) {
  return (
    <button
      aria-label={name}
      className={`flex h-[25px] shrink-0 items-center justify-center ${on ? "mx-px w-[30px] bg-[#8ab13d]" : "w-8"}`}
    >
      <Glyph name={name} w={24} h={23} sw={1.5} />
    </button>
  );
}

function ViewToolbar() {
  return (
    <div className="absolute top-0 left-1/2 flex h-[33px] w-[749px] -translate-x-1/2 items-center border border-t-0 border-[#85898c] bg-[#ced1d6]">
      <ViewTool name="poly" />
      <Down className="mx-[3px] mt-3 text-[#888]" w={7} />
      <ViewTool name="cube" />
      <Down className="mx-[3px] mt-3 text-[#888]" w={7} />
      <span className="mr-1 ml-1.5 h-6 w-px bg-[#bbb]" />
      <ViewTool name="wireCube" />
      <Down className="mx-[3px] mt-3 text-[#888]" w={7} />
      <ViewTool name="tiltLeft" />
      <ViewTool name="tiltRight" />
      <ViewTool name="mirror" />
      <ViewTool name="normalTo" />
      <span className="mr-1 ml-1.5 h-6 w-px bg-[#bbb]" />
      <ViewTool name="labelsOn" on />
      <ViewTool name="labelsSplit" />
      <span className="mx-1 h-6 w-px bg-[#bbb]" />
      <ViewTool name="pickLine" />
      <ViewTool name="pickRect" on />
      {GRAY_TOOL.map((n) => (
        <ViewTool key={n} name={n} />
      ))}
    </div>
  );
}

function Chassis() {
  return (
    <g transform="translate(660 360) scale(.38268 .33333)" stroke="#0b140b" strokeWidth="3.600" strokeLinejoin="round">
      <defs>
        <linearGradient id="plate" x1="150" y1="420" x2="480" y2="360" gradientUnits="userSpaceOnUse">
          <stop offset="0" stopColor="#0aa00a" />
          <stop offset=".04" stopColor="#0aa00a" />
          <stop offset=".06" stopColor="#c09000" />
          <stop offset=".2" stopColor="#c26a00" />
          <stop offset=".5" stopColor="#bb5200" />
          <stop offset=".66" stopColor="#bd7c00" />
          <stop offset=".69" stopColor="#0aa00a" />
        </linearGradient>
        <radialGradient id="hot" cx="240" cy="290" r="150" gradientUnits="userSpaceOnUse">
          <stop offset="0" stopColor="#c00000" />
          <stop offset=".55" stopColor="#c00000" />
          <stop offset="1" stopColor="#bb4a00" stopOpacity="0" />
        </radialGradient>
        <linearGradient id="low" x1="190" y1="0" x2="435" y2="0" gradientUnits="userSpaceOnUse">
          <stop offset="0" stopColor="#bd8200" />
          <stop offset=".6" stopColor="#b85600" />
          <stop offset="1" stopColor="#bd7c00" />
        </linearGradient>
        <linearGradient id="rod" x1="0" y1="0" x2="0" y2="1">
          <stop offset="0" stopColor="#07b80a" />
          <stop offset=".3" stopColor="#06c808" />
          <stop offset=".65" stopColor="#058d08" />
          <stop offset="1" stopColor="#055c06" />
        </linearGradient>
        <linearGradient id="cross" x1="1160" y1="620" x2="1380" y2="540" gradientUnits="userSpaceOnUse">
          <stop offset="0" stopColor="#045d06" />
          <stop offset=".27" stopColor="#045d06" />
          <stop offset=".31" stopColor="#6b4500" />
          <stop offset=".6" stopColor="#7a2000" />
          <stop offset=".8" stopColor="#700000" />
        </linearGradient>
        <linearGradient id="beam" x1="985" y1="0" x2="1490" y2="0" gradientUnits="userSpaceOnUse">
          <stop offset="0" stopColor="#0aa00a" />
          <stop offset=".56" stopColor="#0aa00a" />
          <stop offset=".6" stopColor="#0878a0" />
          <stop offset=".8" stopColor="#0858a8" />
          <stop offset="1" stopColor="#0830a8" />
        </linearGradient>
      </defs>

      {/* left bracket, far arm */}
      <path d="M410 200C415 150 450 85 515 57L530 52 545 54 555 75 572 115 570 145 555 153C505 170 482 240 485 345L550 705 485 710 440 480z" fill="#09960b" />
      <path d="M525 54L545 54 555 75 572 115 570 145 556 152 558 112 543 76z" fill="#0cd014" />
      <path d="M556 152C500 165 468 240 471 345L540 703 550 703 485 345C480 240 510 170 556 152z" fill="#057a08" />
      <path d="M488 385L500 440 510 490 504 500 490 430z" fill="#0a80a0" stroke="none" />
      <ellipse cx="513" cy="117" rx="18" ry="28" fill="#0cc010" transform="rotate(-8 513 117)" />
      <ellipse cx="518" cy="117" rx="12" ry="24" fill="#b5b4b8" transform="rotate(-8 518 117)" stroke="none" />

      {/* left bracket, plate with the round opening */}
      <path d="M195 250L350 183C385 175 408 200 417 240L465 560 487 710 200 830 145 560 150 350C170 310 200 300 210 290z" fill="url(#plate)" />
      <path d="M205 250L325 198 345 300C355 400 330 360 277 357 220 360 190 420 188 480 170 420 165 350 175 325z" fill="url(#hot)" stroke="none" />
      <path d="M165 560C190 640 230 670 277 668 330 660 365 590 368 500L385 500C420 560 430 640 435 725L205 825z" fill="url(#low)" stroke="none" />
      <path d="M355 190C385 180 405 200 413 230L398 250 385 270 380 300 368 230z" fill="#0a7aa4" stroke="none" />
      <path d="M410 240L440 400 455 510 445 500 425 400 412 310z" fill="#0838b0" stroke="none" />
      <path d="M412 232l12 5 3 50-8-2z" fill="#c87a00" stroke="none" />
      <path d="M450 640C450 600 465 570 472 565 485 580 495 620 500 680L540 680 548 704 487 712 455 716z" fill="#c86a00" stroke="none" />
      <path d="M465 640C463 610 470 590 473 588 490 610 495 660 497 682L538 682 545 700 485 710z" fill="#c80000" stroke="none" />
      <path d="M417 240L465 560 487 710 548 706" fill="none" />
      <ellipse cx="277" cy="511" rx="89" ry="154" fill="#0aa00a" />
      <ellipse cx="273" cy="511" rx="83" ry="150" fill="#b5b4b8" stroke="none" />

      {/* left beam */}
      <path d="M200 828L487 710 548 705 585 659 678 656 195 855z" fill="#0a86a8" />
      <path d="M560 675L678 656 470 742 500 715z" fill="#0aa00a" stroke="none" />
      <path d="M260 800l120-50 60-20-70 40-110 45z" fill="#0848c0" stroke="none" />
      <path d="M280 795C320 760 335 755 345 770L300 792z" fill="#c83a00" stroke="none" />
      <path d="M195 855L678 656 692 742 615 828 217 990z" fill="#0aa30a" />
      <path d="M628 686l22-12 14 55-34 8zM340 838l8 50 3 25-20-5zM358 932l35-50 45 15-30 30zM565 845l30-18 20 2-40 18z" fill="#0808c0" stroke="none" />
      <path d="M383 888l20-8 4 22-22 14z" fill="#8a8a96" stroke="none" />
      <path d="M217 990l60-38 130-40-110 48z" fill="#0860b8" stroke="none" />
      <path d="M105 858L195 855 217 990 125 996z" fill="#b07a10" />
      <path d="M115 872L187 870 205 978 132 982z" fill="#0aa00a" />
      <path d="M132 982l45-27 22-15 6 38z" fill="#0a90b0" />
      <path d="M182 945l15-12 3 22-18 4z" fill="#d81000" stroke="none" />

      {/* left bracket, near arm */}
      <path d="M170 207C100 222 50 330 50 450L55 510 120 857 195 853 132 500C128 395 150 335 210 298L208 250 195 222z" fill="#0a920e" />
      <path d="M118 260C130 235 150 218 172 212L195 250 193 296 180 290 165 290 140 250z" fill="#0a7a9c" stroke="none" />
      <path d="M170 207L195 222 211 260 210 298 198 296 195 245z" fill="#0cc814" />
      <path d="M118 502L132 498C128 395 150 335 205 298 130 330 112 400 118 502z" fill="#046a08" />
      <path d="M118 502L132 498 197 852 182 853z" fill="#0a8010" />
      <path d="M120 832l60 5 2 16-58 2z" fill="#b86a00" stroke="none" />
      <path d="M86 605l12 15M100 660l8 45" stroke="#0808b8" strokeWidth="6" />
      <ellipse cx="158" cy="263" rx="19" ry="27" fill="#0cb010" />
      <ellipse cx="163" cy="260" rx="12" ry="22" fill="#b5b4b8" stroke="none" />
      <path d="M152 272l24-8-3 16-14 2z" fill="#c00000" stroke="none" />

      {/* connecting rod */}
      <path d="M470 740C445 780 450 830 490 850L520 825 500 745z" fill="#c84000" stroke="none" />
      <path d="M478 745C458 780 462 820 500 835L520 820 505 742z" fill="#c80000" stroke="none" />
      <path d="M484 740L1000 717 980 815 500 832C462 815 468 750 484 740z" fill="url(#rod)" stroke="none" />

      {/* right bracket, far arm */}
      <path d="M1310 240C1312 205 1345 200 1362 207 1385 222 1388 240 1390 260L1407 440C1410 530 1370 600 1340 635L1297 697 1185 705 1225 640 1327 450 1322 290z" fill="#b88000" />
      <path d="M1310 240C1312 205 1345 200 1362 207L1388 240 1390 290 1375 290 1360 262 1325 300z" fill="#0a9c0c" stroke="none" />
      <path d="M1362 207L1388 240 1407 440C1410 530 1370 600 1340 635L1297 697 1288 697C1350 620 1400 540 1395 440L1378 245z" fill="#0a9c0c" />
      <path d="M1215 650C1260 630 1285 650 1290 695L1187 705z" fill="#c80000" stroke="none" />
      <ellipse cx="1345" cy="273" rx="17" ry="25" fill="#0cc010" />
      <ellipse cx="1350" cy="273" rx="11" ry="20" fill="#b5b4b8" stroke="none" />
      <path d="M1335 455c3-22 18-28 22-12z" fill="#b5b4b8" />

      {/* right beam */}
      <path d="M893 822L1110 735 1185 705 1297 697 1375 622 1467 619 985 820z" fill="#0aa30a" />
      <path d="M985 820L1467 619 1490 752 1003 957z" fill="url(#beam)" />
      <path d="M1422 652l20-8 14 110-20-20zM1120 780l14 0 12 100-20-5zM1152 890l30-55 50 20zM1355 800l30-50 55 10zM1190 745l18-5-8 25zM1288 750l8 30-8-5z" fill="#0808c4" stroke="none" />
      <path d="M1175 843l22-5 2 25-28 14zM1380 760l26-8 4 24-30 12z" fill="#8a8a9a" stroke="none" />
      <path d="M1355 638l30-4-18 8z" fill="#0830b0" stroke="none" />
      <path d="M995 835l25 0 15 45 35 20-30 28-35-25z" fill="#b88a00" stroke="none" />
      <path d="M1000 886L1110 845" stroke="#0830b0" strokeDasharray="8 6" />
      <path d="M893 824L985 820 1003 957 915 961z" fill="#0a7a9a" />
      <path d="M903 838L977 835 992 942 920 944z" fill="#bb9200" />
      <path d="M903 838l35 0 5 20-25 40z" fill="#0aa30a" stroke="none" />
      <path d="M945 842l30-4 12 70-25-10z" fill="#84848f" stroke="none" />
      <path d="M922 942l42-18 18-20 8 36z" fill="#d82010" stroke="none" />
      <path d="M925 942l50-20 16 20z" fill="#0aa30a" stroke="none" />

      {/* right bracket, cross plate */}
      <path d="M1148 672L1240 636 1185 705 1110 735z" fill="#b5b4b8" stroke="none" />
      <path d="M1110 735L1185 705" />
      <path d="M1182 540L1390 455 1352 590 1148 672z" fill="url(#cross)" />
      <path d="M1182 522L1378 443 1390 455 1183 540z" fill="#0cd410" />
      <path d="M1300 478l78-34 10 9-85 32z" fill="#e88a00" stroke="none" />
      <path d="M1380 495l6 0-4 45-18 28 4-30z" fill="#b9a0a0" stroke="#b00000" />

      {/* right bracket, near arm */}
      <path d="M1083 340C1080 300 1110 292 1130 290L1165 325 1181 465C1185 560 1170 640 1110 720L1055 793 958 797C965 765 1000 720 1060 620 1090 570 1100 540 1100 490z" fill="#0a960c" />
      <path d="M1088 370L1115 388 1145 350 1155 350 1168 470C1170 560 1155 640 1112 685 1118 600 1125 540 1100 480z" fill="#0a74a0" stroke="none" />
      <path d="M1118 470C1140 470 1150 500 1148 560L1130 640C1135 560 1135 520 1118 470z" fill="#0a5a98" stroke="none" opacity=".6" />
      <path d="M1110 291L1130 290 1165 325 1181 465C1185 560 1170 640 1110 720L1055 793 1048 793 1105 718C1160 640 1172 560 1168 465L1153 330 1135 300z" fill="#0cae10" />
      <path d="M958 797C965 770 985 755 995 735L1015 760 1040 770 1060 785 1050 797z" fill="#c87000" stroke="none" />
      <path d="M958 797C985 765 1010 770 1045 780L1048 796z" fill="#c80000" stroke="none" />
      <ellipse cx="1120" cy="366" rx="17" ry="23" fill="#0cc010" />
      <ellipse cx="1124" cy="364" rx="11" ry="18" fill="#b5b4b8" stroke="none" />
    </g>
  );
}

function Scene() {
  return (
    <svg viewBox="481 183 1100 701" className="absolute inset-0 size-full" preserveAspectRatio="xMidYMin meet" fontFamily="Roboto, 'Noto Sans', sans-serif">
      <Chassis />
      <g fontSize="12" fill="#7e8a26" opacity=".6">
        <text x="818" y="626">Origine</text>
        <text x="788" y="637" fill="#902020">x</text>
      </g>
      <text x="807" y="591" fontSize="12" fill="#2f7a1a">y</text>

      {/* leaders and black dimension */}
      <g stroke="#3a3a3c" strokeWidth="1.300" fill="#2c2c2e">
        <path d="M599 605L874 587" fill="none" />
        <path d="M802 670L828 814M1137 648L1165 801M829 808L1163 795M1050 632L1061 868" fill="none" />
        <path d="M828 808l14-6v11zM1164 795l-15 6v-11z" />
      </g>
      <path d="M1045 636l6-8 6 8z" fill="#1c5a20" />

      {/* selected dimension */}
      <g stroke="#10f0f8" strokeWidth="1.500" fill="#10f0f8">
        <path d="M1045 679L1071 829M1230 612L1257 763M1072 822L1256 757" fill="none" />
        <path d="M1045 679L1230 612" fill="none" strokeWidth="2.500" strokeDasharray="5 1" />
        <path d="M1071 824l10-10 3 11zM1257 756l-14 0 6 9z" />
      </g>

      <g stroke="#8a8a8a">
        <path d="M977 776l28-1 4 20-28 1z" fill="#f3d23d" />
        <path d="M1005 775l22-1 2 20-20 1z" fill="#fff" />
        <path d="M1175 758l54-19 4 20-55 18z" fill="#66e668" />
        <path d="M1229 739l18-7 4 20-18 7z" fill="#fff" />
      </g>
      <g fontSize="14" fill="#222">
        <text x="982" y="790" transform="rotate(-2 982 790)">292</text>
        <text x="1010" y="789" transform="rotate(-2 1010 789)">±1</text>
        <text x="1181" y="771" fontSize="12" transform="rotate(-19 1181 771)">182,5188</text>
        <text x="1234" y="752" fontSize="12" transform="rotate(-19 1234 752)">±1</text>
      </g>

      {/* deviation tags */}
      <g stroke="#777">
        <path d="M481.500 598.500h43v15h-43zM1004.500 868.500h42v14h-42z" fill="#fff" />
        <path d="M524.500 598.500h74v15h-74z" fill="#0000f5" />
        <path d="M1046.500 868.500h70v14h-70z" fill="#f00" />
      </g>
      <g fontFamily="'DejaVu Sans', sans-serif" fontSize="11" fill="#111">
        <text x="488" y="610">Ecart</text>
        <text x="1011" y="880">Ecart</text>
        <text x="593" y="610" fill="#fff" textAnchor="end">-14,2961</text>
        <text x="1112" y="880" fill="#fff" textAnchor="end">14,3325</text>
      </g>

      {/* view triad and scale bar */}
      <g strokeWidth="3" fill="none">
        <path d="M530 835L525 810" stroke="#12d812" strokeWidth="2" />
        <path d="M530 835H512" stroke="#1212e0" />
        <path d="M530 835L514 841" stroke="#e81010" />
      </g>
      <g fontSize="14">
        <text x="520" y="809" fill="#128a12">Y</text>
        <text x="503" y="840" fill="#1a1aa8">Z</text>
        <text x="505" y="847" fill="#a81a1a">X</text>
        <text x="587" y="863" fontSize="12" fontFamily="'Noto Sans', sans-serif" fill="#333">50 mm</text>
      </g>
      <path d="M505.500 855.500h77v9h-77z" fill="#fff" stroke="#333" />
      <path d="M505 860h78v5h-78z" fill="#333" />
    </svg>
  );
}

const BANDS = [
  "#eb2600", "#ec3d00", "#eb5200", "#ee6b00", "#ee8200", "#ee9700", "#f0ae00", "#edc100", "#edd500", "#eded00",
  "#00ebee", "#00d3e8", "#00bde3", "#00a8e0", "#058cda", "#077ad3", "#0765cd", "#0a55c7", "#0c40c0", "#0c2ebe",
];
const MARKS = [
  ["2,0", 25, "#000"], ["1,6", 69], ["1,2", 111], ["0,8", 153], ["0,5", 183, "#0bd50b"], ["0,0", 236, "#000"],
  ["-0,5", 289, "#0bd50b"], ["-0,8", 323], ["-1,2", 365], ["-1,6", 407], ["-2,0", 448, "#000"],
];

function ColorScale() {
  return (
    <svg width="90" height="474" viewBox="0 0 90 474" className="absolute top-[114px] right-px" fontFamily="Roboto, sans-serif" fontSize="17" fontWeight="300">
      <path d="M48.500.5h37v19h-37z" fill="#f00" stroke="#000" />
      {BANDS.map((c, i) => (
        <rect key={c} x="48" y={25 + i * 21.15} width="37" height="21.4" fill={c} />
      ))}
      <path d="M48 67.500h37M48 109.500h37M48 151.500h37M48 321.500h37M48 363.500h37M48 405.500h37" stroke="#6b5a3a" strokeDasharray="1 1" opacity=".6" />
      <path d="M51.500 183.500h30v105h-30z" fill="#0cd60c" stroke="#0a7a0a" strokeDasharray="1 1" />
      <path d="M51.500 187v-3.500h3M78.500 183.500h3v3.500M51.500 285v3.500h3M78.500 288.500h3V285" fill="none" stroke="#000" />
      {MARKS.map(([t, y, arrow]) => (
        <g key={t}>
          <text x="32" y={y + 7} textAnchor="end" fill={arrow === "#0bd50b" ? arrow : "#111"}>{t}</text>
          {arrow && <path d={`M36 ${y - 6}l13 6-13 6z`} fill={arrow} stroke="#033" />}
        </g>
      ))}
      <path d="M48.500 454.500h37v18h-37z" fill="#00f" stroke="#000" />
    </svg>
  );
}

function Workspace() {
  return (
    <main className="flex min-w-0 flex-1 flex-col">
      <div className="relative min-h-0 flex-1 overflow-hidden bg-[#b5b4b8]">
        <Scene />
        <ColorScale />
        <ViewToolbar />
        <svg width="8" height="8" className="absolute top-1 right-1" aria-hidden>
          <path d="M0 0v7h7z" fill="#fff" />
        </svg>
      </div>
      <div className="mb-1.5 flex h-[26px] shrink-0 items-center border-t-2 border-[#fafafa] bg-[#f0f0f0] pl-1">
        <button aria-label="Précédent">
          <svg width="7" height="10" fill="none" stroke="#777"><path d="M6 1v8L1 5z" /></svg>
        </button>
        <button className="ml-1.5 flex h-6 w-[132px] items-center justify-center bg-[#d6e6fc] pr-1.5 text-[13px] [clip-path:polygon(0_0,100%_0,91%_100%,9%_100%)]">
          Vue du modèle
        </button>
        <span className="flex-1" />
        <button aria-label="Suivant" className="mr-3">
          <svg width="7" height="10" fill="none" stroke="#777"><path d="M1 1v8l5-4z" /></svg>
        </button>
        <button aria-label="Fermer la vue" className="mr-2"><Cross color="#666" size={9} /></button>
        <button aria-label="Aller à" className="mr-1 flex h-[17px] w-4 items-center justify-center border border-[#bbb] bg-white">
          <svg width="11" height="10" fill="#333"><path d="M0 3h5V0l6 5-6 5V7H0z" /></svg>
        </button>
        <button aria-label="Liste" className="mr-[5px] flex h-[17px] w-4 items-center justify-center border border-[#bbb] bg-white">
          <Down className="text-[#333]" w={10} />
        </button>
      </div>
      <PanelHead title={<>Vue tabulaire - GD<u>T</u> (Automatique)</>} menu />
      <div className="flex h-[19px] shrink-0 items-start overflow-hidden pt-1 text-[13px]">
        <button className="flex h-7 w-[260px] items-start gap-1 border border-[#bbb] bg-white pt-[3px] pl-1.5 leading-5 whitespace-nowrap">
          <Glyph name="tableTab" w={18} h={18} />
          Vue tabulaire - GDT (Automatique)
        </button>
        <button className="flex h-7 items-start gap-1 pt-px pl-2 leading-6">
          <Glyph name="errorTab" w={17} h={17} />
          Liste d'erreurs
        </button>
        <button className="flex h-7 items-start gap-1 pt-px pl-3.5 leading-6">
          <Glyph name="consoleTab" w={18} h={18} />
          Console
        </button>
      </div>
    </main>
  );
}

/* ---------- properties ---------- */

const PROPS = [
  { name: "Commun", level: 0 },
  { name: "Nom", value: "Cote linéaire2", level: 1 },
  { name: "Type d'entité", value: "Cote linéaire", level: 1 },
  { name: "Aspect", level: 0 },
  { name: "Visibilité", value: "Vrai", level: 1, button: true },
  { name: "Géométrie de paire", value: "Vrai", level: 1, button: true },
  { name: "Paires de points", value: "Faux", level: 1, button: true },
  { name: "Option", level: 0 },
  { name: "Tolérance", value: "±1", level: 1 },
  { name: "Résultat", level: 0 },
  { name: "Valeur de référence", value: "182,5188 mm", level: 1, open: true },
  { name: "Valeur de réfé...", value: "182,5188 mm", level: 2 },
  { name: "Valeur de réfé...", value: "0 mm", level: 2 },
  { name: "Valeur de réfé...", value: "0 mm", level: 2 },
  { name: "Valeur Mesurée", value: "182,5348 mm", level: 1, open: true, tone: "ok" },
  { name: "Valeur Mesur...", value: "182,5188 mm", level: 2, tone: "ok" },
  { name: "Valeur Mesur...", value: "0,0187 mm", level: 2, tone: "ok" },
  { name: "Valeur Mesur...", value: "2,4173 mm", level: 2, tone: "bad" },
  { name: "Ecart", value: "0,016 mm", level: 1, open: true, tone: "ok" },
  { name: "Ecart X", value: "0 mm", level: 2, tone: "ok" },
  { name: "Ecart Y", value: "0,0187 mm", level: 2, tone: "ok" },
  { name: "Ecart Z", value: "2,4173 mm", level: 2, tone: "bad" },
  { name: "Statistiques", level: 0 },
  { name: "Nombre de points", value: "31", level: 1 },
];

const TONE = { ok: "bg-[#3ee83e]", bad: "bg-[#ff2a2a]" };

function PropRow({ row }) {
  if (row.level === 0) {
    return (
      <tr className="h-[25px]">
        <th colSpan={2} className="p-0 text-left font-bold">
          <div className="flex h-[25px] items-center pl-2">
            <Down className="text-[#7fa036]" w={9} />
            <span className="ml-2 flex h-full flex-1 items-center border-b border-[#ececec] pl-1">{row.name}</span>
          </div>
        </th>
      </tr>
    );
  }
  return (
    <tr className="h-[25px]">
      <th className="p-0 text-left font-normal">
        <div className={`flex h-[25px] items-center ${row.level === 1 ? "pl-[38px]" : "pl-[63px]"}`}>
          <span className="w-3">{row.open && <Down className="-ml-[5px] text-[#7fa036]" w={9} />}</span>
          <span className="flex h-full flex-1 items-center border-b border-l border-[#ececec] pl-1 whitespace-nowrap">{row.name}</span>
        </div>
      </th>
      <td className="border-l border-[#ececec] p-0">
        {row.button ? (
          <button className="h-[23px] w-full border border-r-0 border-[#c0c0c0] bg-[#f0f0f0]">{row.value}</button>
        ) : (
          <div className={`flex h-[25px] items-center border-b border-[#ececec] pl-1 ${TONE[row.tone] || ""}`}>{row.value}</div>
        )}
      </td>
    </tr>
  );
}

function Properties() {
  return (
    <aside className="flex w-[329px] shrink-0 flex-col bg-[#fafafa] text-[13px]">
      <PanelHead title="Propriétés" />
      <div className="flex h-[29px] shrink-0 items-end border-b border-[#e2e2e2] bg-[#f0f0f0]">
        <button className="-mb-px flex h-[26px] items-center gap-[3px] border border-b-0 border-[#bbb] bg-white px-[5px]">
          <Glyph name="clipboard" w={18} h={18} />
          Propriétés
        </button>
        <button className="flex h-6 items-center gap-[3px] pl-[7px]">
          <Glyph name="monitor" w={18} h={18} />
          Affichage
        </button>
      </div>
      <div className="flex h-7 shrink-0 items-center border-b border-[#c6c6c6] bg-[#f0f0f0] pl-0.5">
        <button aria-label="Par catégorie" className="flex h-[23px] w-[30px] items-center justify-center bg-[#8ab13d]">
          <Glyph name="sortCat" w={20} h={20} />
        </button>
        <button aria-label="Alphabétique" className="ml-2.5 flex items-center">
          <span className="flex flex-col text-[11px] leading-[9px] font-bold">
            <span className="text-[#4a6ea8]">A</span>
            <span className="text-[#b04848]">Z</span>
          </span>
          <svg width="12" height="20" className="ml-0.5" fill="#333" stroke="#333" strokeWidth="1.500" aria-hidden>
            <path d="M6 1v14M3.500 14h5L6 18z" />
          </svg>
        </button>
        <span className="ml-4">Nom: Cote linéaire2</span>
      </div>
      <table className="w-full table-fixed border-collapse bg-white">
        <colgroup>
          <col className="w-[177px]" />
          <col />
        </colgroup>
        <thead>
          <tr className="h-[28px] border-b border-[#c6c6c6] bg-[#f0f0f0]">
            <th className="p-0 pl-[30px] text-left font-normal">Nom</th>
            <th className="p-0 text-left font-normal">
              <span className="block border-l border-[#bbb] pl-1">Propriétés</span>
            </th>
          </tr>
        </thead>
        <tbody>
          {PROPS.map((row, i) => (
            <PropRow key={i} row={row} />
          ))}
        </tbody>
      </table>
    </aside>
  );
}

/* ---------- bottom toolbar ---------- */

const SHOW = [
  "donut", "redGrid", "heatCube", "heatBar", "target", "section", "shapeGrid", "shapeGridGray", "points", "poly",
  "plane", "cube", "rings", "dotLine", "disc", "quad", "tin", "axes", "ruler", "arc",
];
const SELECT = [
  ["cube", true], ["meshSel", false], ["cubeTop", true], ["cubeEdge", true], ["cube", true], ["cube", true],
  ["tri", false], ["triPts", false], ["section", false], ["shapeGrid", true], ["target", true], ["tag", true],
];
const MEASURE = ["caliper", "dimLinear", "dimAngular", "dimRadial", "slab", "squareRule", "cubeRule", "polyGray", "addDoc"];

function Grip() {
  return <span className="mx-[3px] h-[18px] w-0.5 shrink-0 border-l-2 border-dotted border-[#bbb]" />;
}

function AutoSelect({ id }) {
  return (
    <div className="relative mr-1 w-[114px] shrink-0">
      <select id={id} aria-label="Mode" className="h-[26px] w-full appearance-none border border-[#aaa] bg-white pl-1.5 text-[13px]">
        <option>Automatique</option>
      </select>
      <Down className="absolute top-[11px] right-1.5 text-[#888]" w={6} />
    </div>
  );
}

function BarTool({ name, on, ...rest }) {
  return (
    <button
      aria-label={name}
      className={`mr-0.5 flex h-[25px] w-[30px] shrink-0 items-center justify-center ${on ? "bg-[#8ab13d]" : ""}`}
    >
      <Glyph name={name} w={23} h={23} sw={1.5} {...rest} />
    </button>
  );
}

function BottomBar() {
  return (
    <footer className="flex h-[38px] shrink-0 items-center overflow-hidden border-b-[5px] border-[#8f9396] bg-[#f0f0f0] pb-0.5">
      <Grip />
      <BarTool name="fit" on />
      <span className="w-0.5" />
      <AutoSelect id="mode-a" />
      <AutoSelect id="mode-b" />
      <Grip />
      <span className="w-0.5" />
      {SHOW.map((n) => (
        <BarTool key={n} name={n} on={n !== "shapeGridGray"} eye={n !== "shapeGridGray"} />
      ))}
      <span className="mt-4 ml-1"><Down w={6} /></span>
      <span className="w-1.5" />
      <Grip />
      {SELECT.map(([n, on], i) => (
        <BarTool key={i} name={n} on={on} cursor />
      ))}
      <span className="mr-[5px] ml-1 h-6 w-px bg-[#c6c6c6]" />
      <BarTool name="removeDoc" />
      <span className="mt-4 ml-0.5"><Down w={6} /></span>
      <span className="w-2" />
      <Grip />
      {MEASURE.map((n) => (
        <BarTool key={n} name={n} />
      ))}
      <span className="mt-4 ml-1.5"><Down w={6} /></span>
    </footer>
  );
}

export default function App() {
  return (
    <div className="flex h-screen flex-col overflow-hidden bg-[#f0f0f0] font-['Noto_Sans','Open_Sans',sans-serif] text-[#222]">
      <TitleBar />
      <TabBar />
      <Ribbon />
      <div className="flex min-h-0 flex-1 gap-1.5 overflow-hidden">
        <ModelManager />
        <Workspace />
        <Properties />
      </div>
      <BottomBar />
    </div>
  );
}
